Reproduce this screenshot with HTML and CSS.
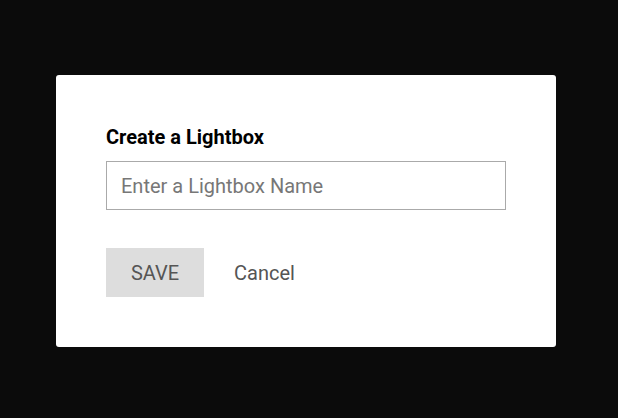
FILE: index.html
```html
<!DOCTYPE html>
<html lang="en">
<head>
  <meta charset="UTF-8" />
  <meta name="viewport" content="width=device-width, initial-scale=1.0" />
  <title>Create a Lightbox</title>
  <link rel="stylesheet" href="styles.css">
</head>
<body>
  <div class="overlay">
    <form class="dialog" onsubmit="return false">
      <label class="title" for="lightboxName">Create a Lightbox</label>
      <input id="lightboxName" class="name" type="text" placeholder="Enter a Lightbox Name" />
      <div class="actions">
        <button class="save" type="submit">SAVE</button>
        <button class="cancel" type="button">Cancel</button>
      </div>
    </form>
  </div>
</body>
</html>
```

FILE: styles.css
```css
html, body {
  margin: 0;
  height: 100%;
}
body {
  background: #0b0b0b;
  font-family: Roboto, 'Liberation Sans', sans-serif;
}
.overlay {
  height: 100%;
  box-sizing: border-box;
  padding: 4px 6px 0 0;
  display: flex;
  justify-content: center;
  align-items: center;
}
.dialog {
  width: 400px;
  padding: 50px;
  background: white;
  border-radius: 3px;
  display: flex;
  flex-direction: column;
}
.title {
  font-size: 20px;
  font-weight: bold;
  color: #000;
  line-height: 24px;
  margin-bottom: 12px;
}
.name {
  width: 100%;
  height: 49px;
  box-sizing: border-box;
  border: 1px solid #aaa;
  padding: 0 14px;
  font-family: inherit;
  font-size: 20px;
  color: #333;
  outline: none;
}
.name::placeholder {
  color: #777;
}
.actions {
  display: flex;
  align-items: center;
  margin-top: 38px;
}
button {
  font-family: inherit;
  font-size: 20px;
  border: none;
  cursor: pointer;
  color: #555;
}
.save {
  width: 98px;
  height: 49px;
  background: #ddd;
}
.cancel {
  background: none;
  margin-left: 24px;
  padding: 0 6px;
}
```
